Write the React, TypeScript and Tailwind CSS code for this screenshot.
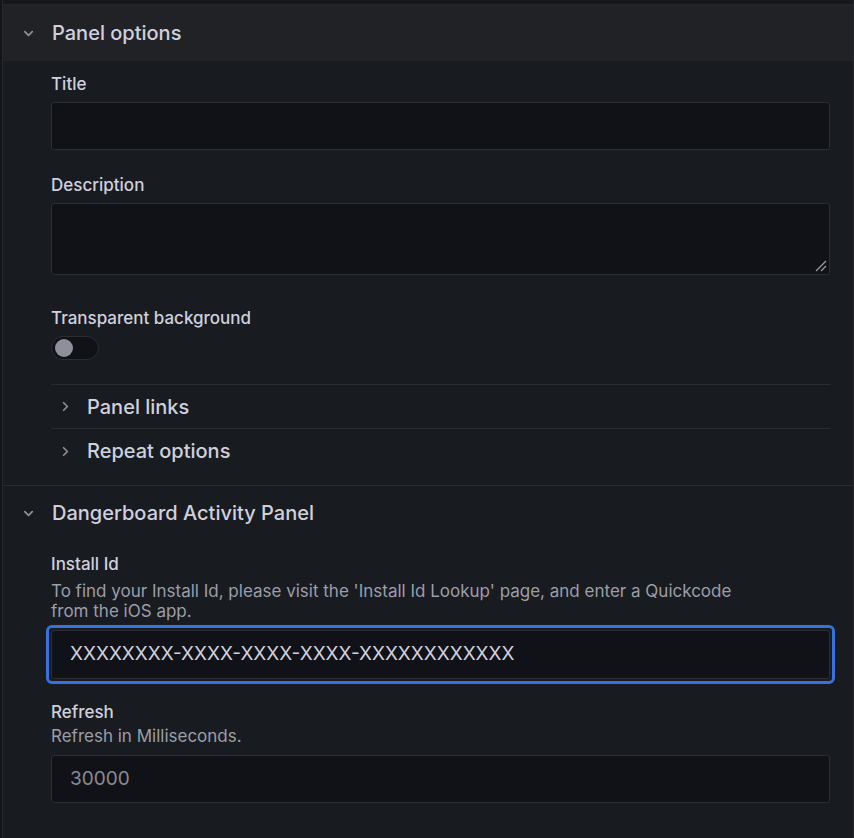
import React from "react";

const font = { fontFamily: "Inter, 'Noto Sans', sans-serif" };

function ChevronDown() {
  return (
    <svg width="15" height="15" viewBox="0 0 24 24" fill="none" stroke="#8e8e9b" strokeWidth="2.8" strokeLinecap="round" strokeLinejoin="round">
      <path d="M6 9l6 6 6-6" />
    </svg>
  );
}

function ChevronRight() {
  return (
    <svg width="15" height="15" viewBox="0 0 24 24" fill="none" stroke="#8e8e9b" strokeWidth="2.8" strokeLinecap="round" strokeLinejoin="round">
      <path d="M9 6l6 6-6 6" />
    </svg>
  );
}

function Label({ children }: { children: React.ReactNode }) {
  return <div className="text-[17px] font-medium leading-[24px] text-[#d0d0de]">{children}</div>;
}

function Description({ children }: { children: React.ReactNode }) {
  return <div className="text-[17px] leading-[20px] text-[#9d9ea8] max-w-[720px]">{children}</div>;
}

function TextInput({ value, placeholder }: { value?: string; placeholder?: string }) {
  return (
    <div className="h-[48px] w-full rounded-[3px] border border-[#2c2e34] bg-[#111217] flex items-center px-[18px] text-[19px]">
      {value ? (
        <span className="text-[#d0d0de]">{value}</span>
      ) : placeholder ? (
        <span className="text-[#8a8b94]">{placeholder}</span>
      ) : null}
    </div>
  );
}

export default function App() {
  return (
    <div style={font} className="w-[854px] h-[838px] overflow-hidden bg-[#141619] flex">
      <div className="w-[2px] bg-[#131519]" />
      <div className="flex-1 flex flex-col border-l border-r border-[#26282d] bg-[#181b1f]">
        <div className="h-[5px] bg-[#15171b] border-b border-[#24262b]" />

        {/* Panel options */}
        <div className="h-[56px] bg-[#202226] flex items-center">
          <div className="w-[49px] flex justify-center pl-[1px]">
            <ChevronDown />
          </div>
          <span className="text-[20px] font-medium text-[#d0d0de]">Panel options</span>
        </div>

        <div className="pl-[48px] pr-[23px] pt-[11px] flex flex-col">
          <Label>Title</Label>
          <div className="mt-[6px]">
            <TextInput />
          </div>

          <div className="mt-[23px]">
            <Label>Description</Label>
          </div>
          <div className="mt-[6px] relative h-[72px] w-full rounded-[3px] border border-[#2c2e34] bg-[#111217]">
            <svg className="absolute right-[2px] bottom-[2px]" width="12" height="12" viewBox="0 0 12 12" stroke="#9a9aa0" strokeWidth="1.3">
              <path d="M1 11L11 1M6 11L11 6" />
            </svg>
          </div>

          <div className="mt-[31px]">
            <Label>Transparent background</Label>
          </div>
          <div className="mt-[6px] w-[48px] h-[24px] rounded-full border border-[#2c2e34] bg-[#111217] flex items-center pl-[3px]">
            <div className="w-[18px] h-[18px] rounded-full bg-[#8e8f9a]" />
          </div>

          <div className="mt-[24px] border-t border-[#2a2c31]" />
          <div className="h-[43px] flex items-center">
            <div className="w-[36px] flex justify-center pr-[8px]">
              <ChevronRight />
            </div>
            <span className="text-[20px] font-medium text-[#d0d0de]">Panel links</span>
          </div>
          <div className="border-t border-[#2a2c31]" />
          <div className="h-[44px] flex items-center">
            <div className="w-[36px] flex justify-center pr-[8px]">
              <ChevronRight />
            </div>
            <span className="text-[20px] font-medium text-[#d0d0de]">Repeat options</span>
          </div>
        </div>

        <div className="mt-[12px] border-t border-[#2a2c31]" />

        {/* Dangerboard Activity Panel */}
        <div className="h-[54px] flex items-center">
          <div className="w-[49px] flex justify-center pl-[1px]">
            <ChevronDown />
          </div>
          <span className="text-[20px] font-medium text-[#d0d0de]">Dangerboard Activity Panel</span>
        </div>

        <div className="pl-[48px] pr-[23px] pt-[12px] flex flex-col">
          <Label>Install Id</Label>
          <div className="mt-[5px]">
            <Description>
              To find your Install Id, please visit the 'Install Id Lookup' page, and enter a Quickcode from the iOS app.
            </Description>
          </div>
          <div className="mt-[4px] -mx-[5px] rounded-[6px] border-[3px] border-[#3871dc] px-[2px] py-[2px]">
            <div className="h-[49px] w-full rounded-[3px] border border-[#2c2e34] bg-[#111217] flex items-center px-[18px] text-[19px] text-[#d0d0de]">
              XXXXXXXX-XXXX-XXXX-XXXX-XXXXXXXXXXXX
            </div>
          </div>

          <div className="mt-[16px]">
            <Label>Refresh</Label>
          </div>
          <div className="mt-[2px]">
            <Description>Refresh in Milliseconds.</Description>
          </div>
          <div className="mt-[9px]">
            <TextInput placeholder="30000" />
          </div>
        </div>
      </div>
    </div>
  );
}
